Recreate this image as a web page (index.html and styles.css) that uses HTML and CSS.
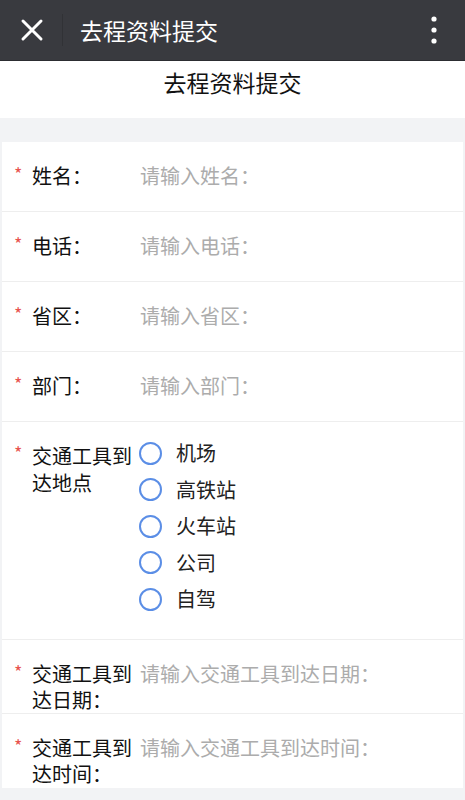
FILE: index.html
```html
<!DOCTYPE html>
<html lang="zh">
<head>
<meta charset="utf-8">
<link rel="stylesheet" href="styles.css">
</head>
<body>
<header class="navbar">
  <svg class="close" width="24" height="24" viewBox="0 0 24 24"><path d="M3 3 L21 21 M21 3 L3 21" stroke="#fff" stroke-width="3" stroke-linecap="round" fill="none"/></svg>
  <span class="nav-sep"></span>
  <span class="nav-title">去程资料提交</span>
  <svg class="more" width="8" height="28" viewBox="0 0 8 28"><circle cx="4" cy="3" r="2.6" fill="#fff"/><circle cx="4" cy="14" r="2.6" fill="#fff"/><circle cx="4" cy="25" r="2.6" fill="#fff"/></svg>
</header>
<div class="page-title">去程资料提交</div>
<div class="gap"></div>
<form class="card">
  <div class="row">
    <span class="star">*</span>
    <span class="label">姓名：</span>
    <span class="ph">请输入姓名：</span>
  </div>
  <div class="row">
    <span class="star">*</span>
    <span class="label">电话：</span>
    <span class="ph">请输入电话：</span>
  </div>
  <div class="row">
    <span class="star">*</span>
    <span class="label">省区：</span>
    <span class="ph">请输入省区：</span>
  </div>
  <div class="row">
    <span class="star">*</span>
    <span class="label">部门：</span>
    <span class="ph">请输入部门：</span>
  </div>
  <div class="row radio-row">
    <span class="star">*</span>
    <span class="label">交通工具到达地点</span>
    <div class="radios">
      <div class="radio"><span class="circle"></span>机场</div>
      <div class="radio"><span class="circle"></span>高铁站</div>
      <div class="radio"><span class="circle"></span>火车站</div>
      <div class="radio"><span class="circle"></span>公司</div>
      <div class="radio"><span class="circle"></span>自驾</div>
    </div>
  </div>
  <div class="row tall">
    <span class="star">*</span>
    <span class="label">交通工具到达日期：</span>
    <span class="ph">请输入交通工具到达日期：</span>
  </div>
  <div class="row tall last">
    <span class="star">*</span>
    <span class="label">交通工具到达时间：</span>
    <span class="ph">请输入交通工具到达时间：</span>
  </div>
</form>
</body>
</html>
```

FILE: styles.css
```css
* { box-sizing: border-box; }
html, body { margin: 0; padding: 0; }
body {
  background: #f2f3f5;
  font-family: "Noto Sans CJK SC", "Noto Sans", sans-serif;
  color: #111;
  width: 465px;
  height: 800px;
  overflow: hidden;
}
.navbar {
  height: 61px;
  background: #393a3f;
  border-bottom: 1px solid #2c2d31;
  display: flex;
  align-items: center;
  padding-left: 20px;
  padding-right: 27px;
}
.close { flex: none; }
.nav-sep {
  width: 1px;
  height: 32px;
  background: #313236;
  margin-left: 18px;
  margin-right: 17px;
}
.nav-title {
  color: #fff;
  font-size: 23px;
  flex: 1;
}
.more { flex: none; }
.page-title {
  background: #fff;
  height: 57px;
  text-align: center;
  font-size: 23px;
  line-height: 42px;
  color: #111;
}
.gap { height: 24px; }
.card {
  background: #fff;
  margin: 0 2px;
}
.row {
  display: flex;
  align-items: flex-start;
  height: 70px;
  padding: 21px 0 0 12px;
  border-bottom: 1px solid #eeeeee;
  font-size: 20px;
  line-height: 26px;
}
.star {
  width: 18px;
  flex: none;
  color: #e8544f;
  font-size: 18px;
  line-height: 20px;
}
.label {
  width: 108px;
  flex: none;
  color: #111;
}
.ph { color: #acacac; }
.radio-row { height: 218px; padding-top: 13px; }
.radio-row .star, .radio-row .label { margin-top: 7px; }
.radio-row .label { line-height: 27px; }
.radios { display: flex; flex-direction: column; margin-left: -1px; }
.radio {
  display: flex;
  align-items: center;
  height: 36.5px;
  color: #222;
}
.circle {
  width: 23px;
  height: 23px;
  border: 2px solid #5b8ee6;
  border-radius: 50%;
  margin-right: 14px;
  flex: none;
}
.tall { height: 74px; }
.tall.last { border-bottom: none; }
```
